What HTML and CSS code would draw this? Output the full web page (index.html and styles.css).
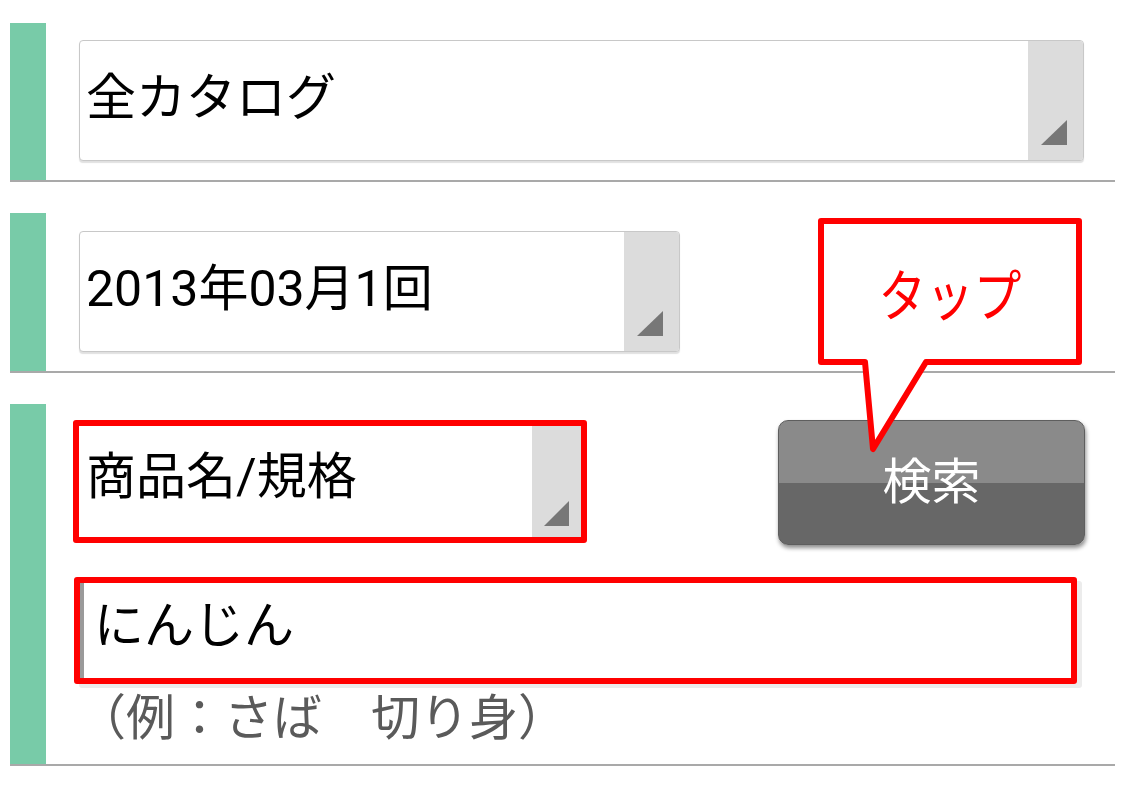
FILE: index.html
```
<!DOCTYPE html>
<html>

	<head>
		<meta charset="UTF-8">
		<title>検索</title>
		<link rel="stylesheet" href="styles.css">
	</head>

	<body>

		<div class="page">

			<div class="row">
				<div class="mark"></div>
				<div class="body">
					<div class="select w-full">
						<div class="val">全カタログ</div>
						<div class="arrow"></div>
					</div>
				</div>
			</div>

			<div class="row">
				<div class="mark"></div>
				<div class="body">
					<div class="select w-half">
						<div class="val">2013年03月1回</div>
						<div class="arrow"></div>
					</div>
				</div>
			</div>

			<div class="row">
				<div class="mark"></div>
				<div class="body body-search">
					<div class="line">
						<div class="hl hl-select">
							<div class="select select-flat">
								<div class="val">商品名/規格</div>
								<div class="arrow"></div>
							</div>
						</div>
						<div class="btn-search">検索</div>
					</div>
					<div class="hl hl-input">
						<div class="input">にんじん</div>
					</div>
					<p class="hint">（例：さば　切り身）</p>
				</div>
			</div>

			<!-- 吹き出し -->
			<div class="callout">
				<svg width="272" height="240" viewBox="0 0 272 240">
					<path d="M6 6 H264 V147 H111 L58 234 L50 147 H6 Z" fill="#fff" stroke="#ff0000" stroke-width="6" stroke-linejoin="round" />
				</svg>
				<div class="callout-text"><span>タップ</span></div>
			</div>

		</div>

	</body>

</html>
```

FILE: styles.css
```
body {
	margin: 0;
	background-color: #fff;
	font-family: Roboto, "Noto Sans CJK JP", sans-serif;
	color: #000;
}

.page {
	position: relative;
	width: 1105px;
	padding: 23px 10px 0 10px;
}

.row {
	display: flex;
	border-bottom: 2px solid #a9a9a9;
	margin-bottom: 31px;
}

.mark {
	width: 36px;
	background-color: #78cba8;
	flex-shrink: 0;
}

.body {
	flex: 1;
	padding: 17px 0 19px 33px;
}

.row:nth-child(2) .body {
	padding-top: 18px;
}

/* セレクトボックス */
.select {
	display: flex;
	height: 121px;
	box-sizing: border-box;
	border: 1px solid #c8c8c8;
	border-radius: 4px;
	box-shadow: 0 2px 1px rgba(0, 0, 0, 0.12);
	background-color: #fff;
	overflow: hidden;
}

.w-full {
	width: 1005px;
}

.w-half {
	width: 601px;
}

.select .val {
	flex: 1;
	padding: 22px 0 0 6px;
	font-size: 50px;
	line-height: 70px;
	white-space: nowrap;
}

.select .arrow {
	position: relative;
	width: 55px;
	background-color: #dcdcdc;
}

.select .arrow::after {
	content: "";
	position: absolute;
	right: 16px;
	bottom: 15px;
	width: 26px;
	height: 25px;
	background-color: #777;
	clip-path: polygon(100% 0, 100% 100%, 0 100%);
}

/* 検索行 */
.body-search {
	padding: 16px 30px 17px 27px;
}

.line {
	display: flex;
	justify-content: space-between;
	align-items: flex-start;
}

.hl {
	border: 6px solid #ff0000;
	border-radius: 3px;
}

.hl-select {
	width: 502px;
	height: 111px;
}

.select-flat {
	height: 111px;
	border: 0;
	border-radius: 0;
	box-shadow: none;
}

.select-flat .val {
	padding: 16px 0 0 7px;
}

.select-flat .arrow {
	width: 49px;
}

.select-flat .arrow::after {
	right: 12px;
	bottom: 11px;
	width: 25px;
}

.btn-search {
	width: 307px;
	height: 125px;
	box-sizing: border-box;
	border: 1px solid #5e5e5e;
	border-radius: 10px;
	background: linear-gradient(#8a8a8a 0, #8a8a8a 50%, #676767 50%, #676767 100%);
	box-shadow: 1px 3px 4px rgba(0, 0, 0, 0.45);
	color: #fff;
	font-size: 49px;
	display: flex;
	justify-content: center;
	align-items: center;
	padding-bottom: 10px;
}

.hl-input {
	width: 991px;
	height: 95px;
	margin: 32px 0 0 1px;
	box-shadow: 5px 4px 0 #ececec;
}

.input {
	height: 95px;
	box-sizing: border-box;
	border-left: 4px solid #9a9a9a;
	padding: 8px 0 0 10px;
	font-size: 50px;
	line-height: 70px;
}

.hint {
	margin: 7px 0 0 4px;
	font-size: 49px;
	line-height: 56px;
	color: #5a5a5a;
	white-space: nowrap;
}

/* 吹き出し */
.callout {
	position: absolute;
	left: 815px;
	top: 215px;
	width: 272px;
	height: 240px;
}

.callout svg {
	display: block;
}

.callout-text {
	position: absolute;
	left: 3px;
	top: 3px;
	width: 264px;
	height: 147px;
	display: flex;
	justify-content: center;
	align-items: center;
	color: #ff0000;
	font-size: 56px;
}

.callout-text span {
	display: inline-block;
	transform: scaleX(0.85);
}
```
